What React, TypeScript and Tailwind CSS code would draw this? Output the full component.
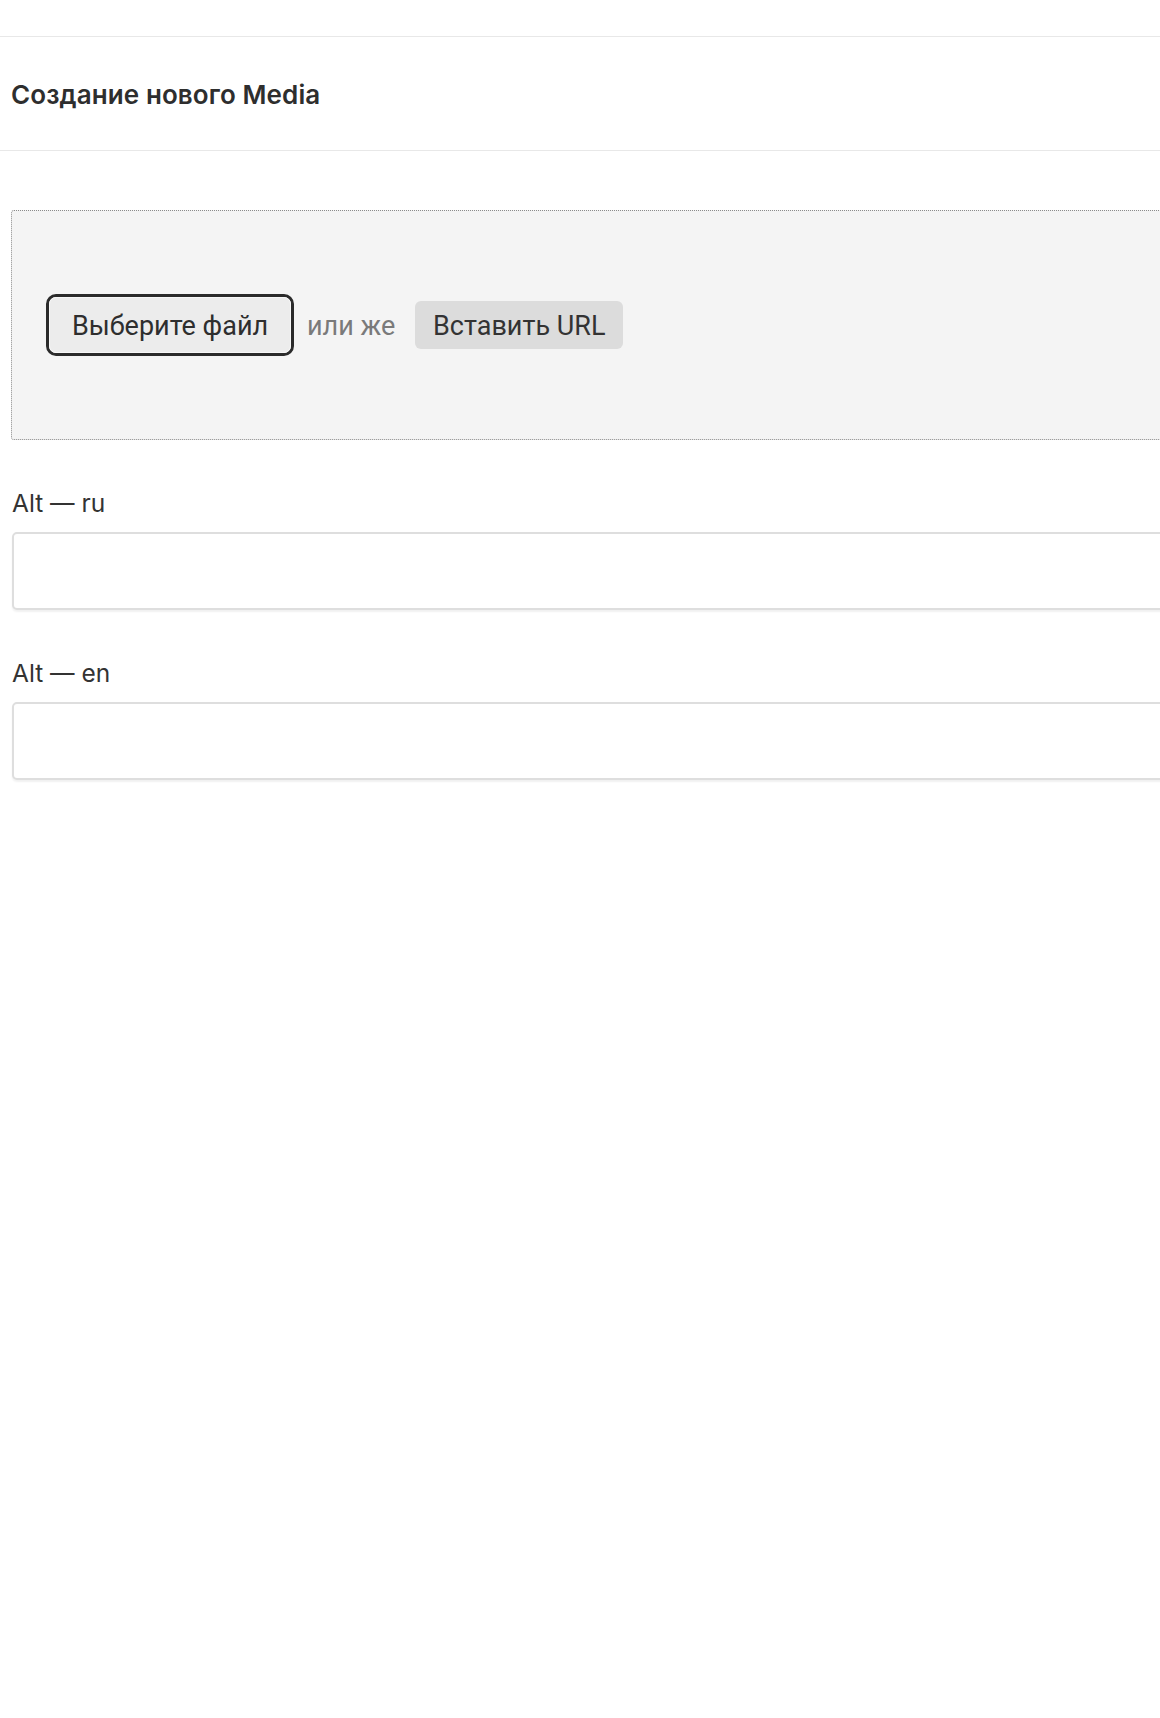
import React from "react";

const AltField = ({ label }: { label: string }) => {
  return (
    <div className="flex flex-col">
      <label className="pl-[12px] font-[Inter,'Noto_Sans',sans-serif] text-[24.5px] leading-[36px] text-[#333]">
        {label}
      </label>
      <input
        type="text"
        className="mt-[11px] ml-[12px] h-[78px] w-[1240px] rounded-[5px] border-2 border-[#dedede] bg-white shadow-[0_2px_2px_rgba(0,0,0,0.06)] outline-none"
      />
    </div>
  );
};

const App = () => {
  return (
    <div className="min-h-[1718px] w-full overflow-hidden bg-white">
      <div className="w-[1300px]">
        <div className="h-[36px]" />
        <div className="flex h-[115px] items-center border-y-[1.5px] border-[#e8e8e8] pl-[11px]">
          <h1 className="pt-[1px] font-[Inter,'Noto_Sans',sans-serif] text-[26px] font-semibold tracking-[0.1px] text-[#2e2e2e]">
            Создание нового Media
          </h1>
        </div>

        <div className="mt-[59px] ml-[11px] flex h-[230px] w-[1260px] items-center rounded-[3px] border border-dotted border-[#8a8a8a] bg-[#f4f4f4] pl-[34px]">
          <div className="flex items-center font-[Roboto,'Noto_Sans',sans-serif] text-[27px]">
            <button className="h-[62px] w-[248px] rounded-[10px] border-[3px] border-[#2b2b2b] p-0">
              <span className="flex h-full w-full items-center justify-center rounded-[7px] border-[1.5px] border-[#f7f7f7] bg-[#ececec] pt-[3px] text-[#2e2e2e]">
                Выберите файл
              </span>
            </button>
            <span className="ml-[13px] pt-[3px] text-[#7a7a7a]">или же</span>
            <button className="ml-[20px] h-[48px] w-[208px] rounded-[6px] bg-[#dcdcdc] pt-[3px] text-[#333]">
              Вставить URL
            </button>
          </div>
        </div>

        <div className="mt-[45px] flex flex-col gap-[45px]">
          <AltField label="Alt — ru" />
          <AltField label="Alt — en" />
        </div>
      </div>
    </div>
  );
};

export default App;
